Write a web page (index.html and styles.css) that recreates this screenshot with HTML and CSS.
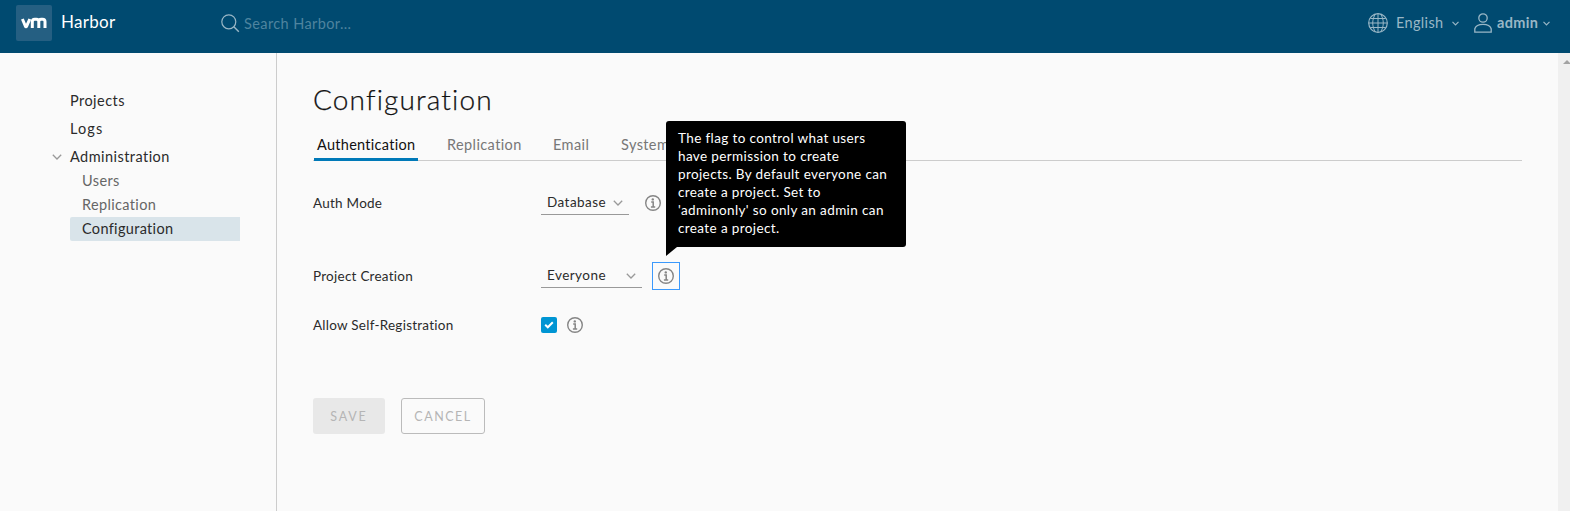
FILE: index.html
```html
<!DOCTYPE html>
<html lang="en">
<head>
<meta charset="utf-8">
<title>Harbor</title>
<link rel="stylesheet" href="styles.css">
</head>
<body>
<svg class="defs" width="0" height="0" aria-hidden="true">
  <symbol id="info" viewBox="0 0 16 16"><circle cx="8" cy="8" r="7.3" fill="none" stroke="currentColor" stroke-width="1.4"/><circle cx="7.8" cy="4.400" r="1.200" fill="currentColor"/><path d="M6.200 7h2v4.800M5.900 12h4.300" fill="none" stroke="currentColor" stroke-width="1.500"/></symbol>
  <symbol id="caret" viewBox="0 0 10 6"><path d="M.8.8 5 5 9.200.8" fill="none" stroke="currentColor" stroke-width="1.300"/></symbol>
</svg>
<header class="header">
  <div class="brand"><svg class="logo" viewBox="0 0 36 36"><rect width="36" height="36" rx="2" fill="#255f82"/><path d="M6.400 14 9.300 21Q10 22.500 10.700 21L13.800 14M16.300 22.900V16.500Q16.300 14.200 18.700 14.200H20.400Q22.800 14.200 22.800 16.500V22.900M22.800 16.500Q22.800 14.200 25.200 14.200H26.600Q29 14.200 29 16.500V22.900" fill="none" stroke="#fff" stroke-width="3"/></svg><span class="product">Harbor</span></div>
  <div class="search"><svg class="search-icon" viewBox="0 0 19 19"><circle cx="7.800" cy="7.800" r="7" fill="none" stroke="currentColor" stroke-width="1.200"/><path d="m12.800 12.800 5 5" stroke="currentColor" stroke-width="1.400"/></svg><span class="placeholder">Search Harbor...</span></div>
  <div class="language"><svg class="globe" viewBox="0 0 20 20"><g fill="none" stroke="currentColor"><circle cx="10" cy="10" r="9.300" stroke-width="1.200"/><path d="M10 .7v18.600M.7 10h18.600M2.500 5.500h15M2.500 14.500h15M7.500 1C3.800 6 3.800 14 7.500 19M12.500 1c3.700 5 3.700 13 0 18"/></g></svg><span class="language-name">English</span><svg class="small-caret" viewBox="0 0 7 5"><path d="m.5.8 3 3 3-3" fill="none" stroke="currentColor" stroke-width="1.200"/></svg></div>
  <div class="account"><svg class="person" viewBox="0 0 18 20"><g fill="none" stroke="currentColor" stroke-width="1.300"><circle cx="9" cy="5" r="4.200"/><path d="M.8 19.200v-3.400C2.500 9.800 15.500 9.800 17.200 15.800v3.400z"/></g></svg><span class="user">admin</span><svg class="small-caret" viewBox="0 0 7 5"><path d="m.5.8 3 3 3-3" fill="none" stroke="currentColor" stroke-width="1.200"/></svg></div>
</header>
<div class="body">
  <nav class="sidebar">
    <a class="item projects">Projects</a>
    <a class="item logs">Logs</a>
    <a class="item group"><svg class="group-caret"><use href="#caret"/></svg>Administration</a>
    <a class="child">Users</a>
    <a class="child replication-link">Replication</a>
    <a class="child active">Configuration</a>
  </nav>
  <main class="content">
    <h1 class="title">Configuration</h1>
    <div class="tabs"><span class="tab selected">Authentication</span><span class="tab replication">Replication</span><span class="tab email">Email</span><span class="tab">System</span></div>
    <div class="row auth"><label class="label auth-label">Auth Mode</label><div class="select database"><span class="database-text">Database</span><svg class="caret"><use href="#caret"/></svg></div><svg class="info"><use href="#info"/></svg></div>
    <div class="row creation"><label class="label creation-label">Project Creation</label><div class="select everyone"><span>Everyone</span><svg class="caret"><use href="#caret"/></svg></div>
      <div class="focus"><svg class="focus-icon"><use href="#info"/></svg><div class="tooltip"><span class="t1">The flag to control what users</span><br><span class="t2">have permission to create</span><br><span class="t3">projects. By default everyone can</span><br><span class="t4">create a project. Set to</span><br><span class="t5">'adminonly' so only an admin can</span><br><span class="t6">create a project.</span></div></div>
    </div>
    <div class="row registration"><label class="label">Allow Self-Registration</label><div class="checkbox"><svg class="check" viewBox="0 0 16 16"><path d="m4.200 7.800 2.600 2.500 5-5" fill="none" stroke="#fff" stroke-width="2"/></svg></div><svg class="info"><use href="#info"/></svg></div>
    <div class="buttons"><button class="button save" disabled>SAVE</button><button class="button cancel">CANCEL</button></div>
  </main>
  <div class="scrollbar"><svg class="scroll-arrow" viewBox="0 0 8 4"><path d="M0 4 4 0l4 4z" fill="#a3a3a3"/></svg></div>
</div>
</body>
</html>
```
FILE: styles.css
```css
* { box-sizing: border-box; }
body { margin: 0; height: 511px; overflow: hidden; background: #fafafa; color: #2b2b2b; font: 14.500px/24px Lato, "Open Sans", sans-serif; }
svg { display: block; flex: none; }
.defs { position: absolute; }
.header { height: 53px; display: flex; align-items: flex-start; background: #004a70; color: #99b7c6; }
.brand { width: 221px; padding: 5px 0 0 16px; display: flex; }
.logo { width: 36px; height: 36px; margin-right: 9px; }
.product { color: #fff; font-size: 17px; line-height: 34px; letter-spacing: .3px; }
.search { flex: 1; display: flex; padding-top: 14px; }
.search-icon { width: 19px; height: 19px; margin-right: 4px; }
.placeholder { color: #4f849f; line-height: 19px; letter-spacing: .4px; }
.language { width: 106px; display: flex; padding-top: 13px; line-height: 20px; }
.globe { width: 20px; height: 20px; margin-right: 8px; }
.language-name { width: 56px; letter-spacing: .35px; }
.small-caret { width: 7px; height: 5px; margin-top: 8px; }
.account { width: 96px; display: flex; padding-top: 13px; line-height: 20px; }
.person { width: 18px; height: 20px; margin-right: 5px; }
.user { width: 46px; font-weight: 700; letter-spacing: .35px; }
.body { display: flex; height: 458px; }
.sidebar { width: 277px; border-right: 1px solid #ccc; padding: 34px 36px 0 70px; }
.item, .child { display: block; }
.item { height: 28px; line-height: 28px; letter-spacing: .45px; }
.logs { letter-spacing: 1.100px; }
.group { display: flex; align-items: center; margin-left: -18px; height: 26px; padding-top: 2px; }
.group-caret { width: 10px; height: 6px; margin-right: 8px; color: #999; }
.child { height: 24px; padding-left: 12px; color: #666; letter-spacing: .4px; }
.replication-link { letter-spacing: .35px; }
.active { background: #d9e4ea; color: #2b2b2b; border-radius: 2px 0 0 2px; letter-spacing: .32px; }
.content { flex: 1; padding: 28px 36px 0; }
.title { margin: 0; height: 38px; color: #111; font-size: 28px; font-weight: 300; line-height: 37px; letter-spacing: 1.150px; -webkit-text-stroke: .25px #111; }
.tabs { display: flex; height: 42px; border-bottom: 1px solid #ccc; padding-top: 14px; color: #777; letter-spacing: .4px; }
.tab { white-space: nowrap; }
.selected { width: 104px; height: 28px; margin: 0 29px 0 1px; padding-left: 3px; border-bottom: 3px solid #0079b8; color: #111; letter-spacing: .28px; }
.replication { width: 106px; }
.email { width: 68px; }
.row { display: flex; align-items: center; font-size: 13.500px; line-height: 24px; }
.auth { height: 24px; margin-top: 30px; }
.creation { height: 28px; margin-top: 47px; }
.registration { height: 24px; margin-top: 23px; }
.label { width: 228px; letter-spacing: .25px; }
.select { height: 24px; padding: 0 6px; display: flex; align-items: center; justify-content: space-between; border-bottom: 1px solid #999; line-height: 23px; letter-spacing: .45px; }
.database { width: 88px; margin-right: 16px; }
.everyone { width: 101px; margin-right: 10px; }
.caret { width: 10px; height: 6px; color: #999; }
.info, .focus-icon { width: 16px; height: 16px; color: #858585; }
.focus { position: relative; width: 28px; height: 28px; padding: 5px; border: 1px solid #3b99fc; }
.tooltip { position: absolute; left: 13px; bottom: 42px; width: 240px; height: 126px; padding: 8px 12px; border-radius: 3px 3px 3px 0; background: #000; color: #fff; line-height: 18px; letter-spacing: .38px; white-space: nowrap; }
.tooltip::after { content: ""; position: absolute; left: 0; top: 125px; width: 11px; height: 10px; background: #000; clip-path: polygon(0 0, 100% 0, 100% 10%, 0 100%); }
.checkbox { width: 16px; height: 16px; margin-right: 10px; border-radius: 2px; background: #0095d3; }
.check { width: 16px; height: 16px; }
.buttons { display: flex; gap: 16px; margin-top: 61px; }
.button { height: 36px; padding: 2px 0 0; border: 0; border-radius: 3px; background: #e8e8e8; color: #b5b5b5; font: 12.500px/34px Lato, sans-serif; letter-spacing: 1.500px; }
.save { width: 72px; letter-spacing: 1.800px; }
.cancel { width: 84px; border: 1px solid #bbb; background: transparent; line-height: 32px; }
.scrollbar { width: 12px; padding: 7px 0 0 5px; background: #f0f0f0; }
.scroll-arrow { width: 8px; height: 4px; }
```
